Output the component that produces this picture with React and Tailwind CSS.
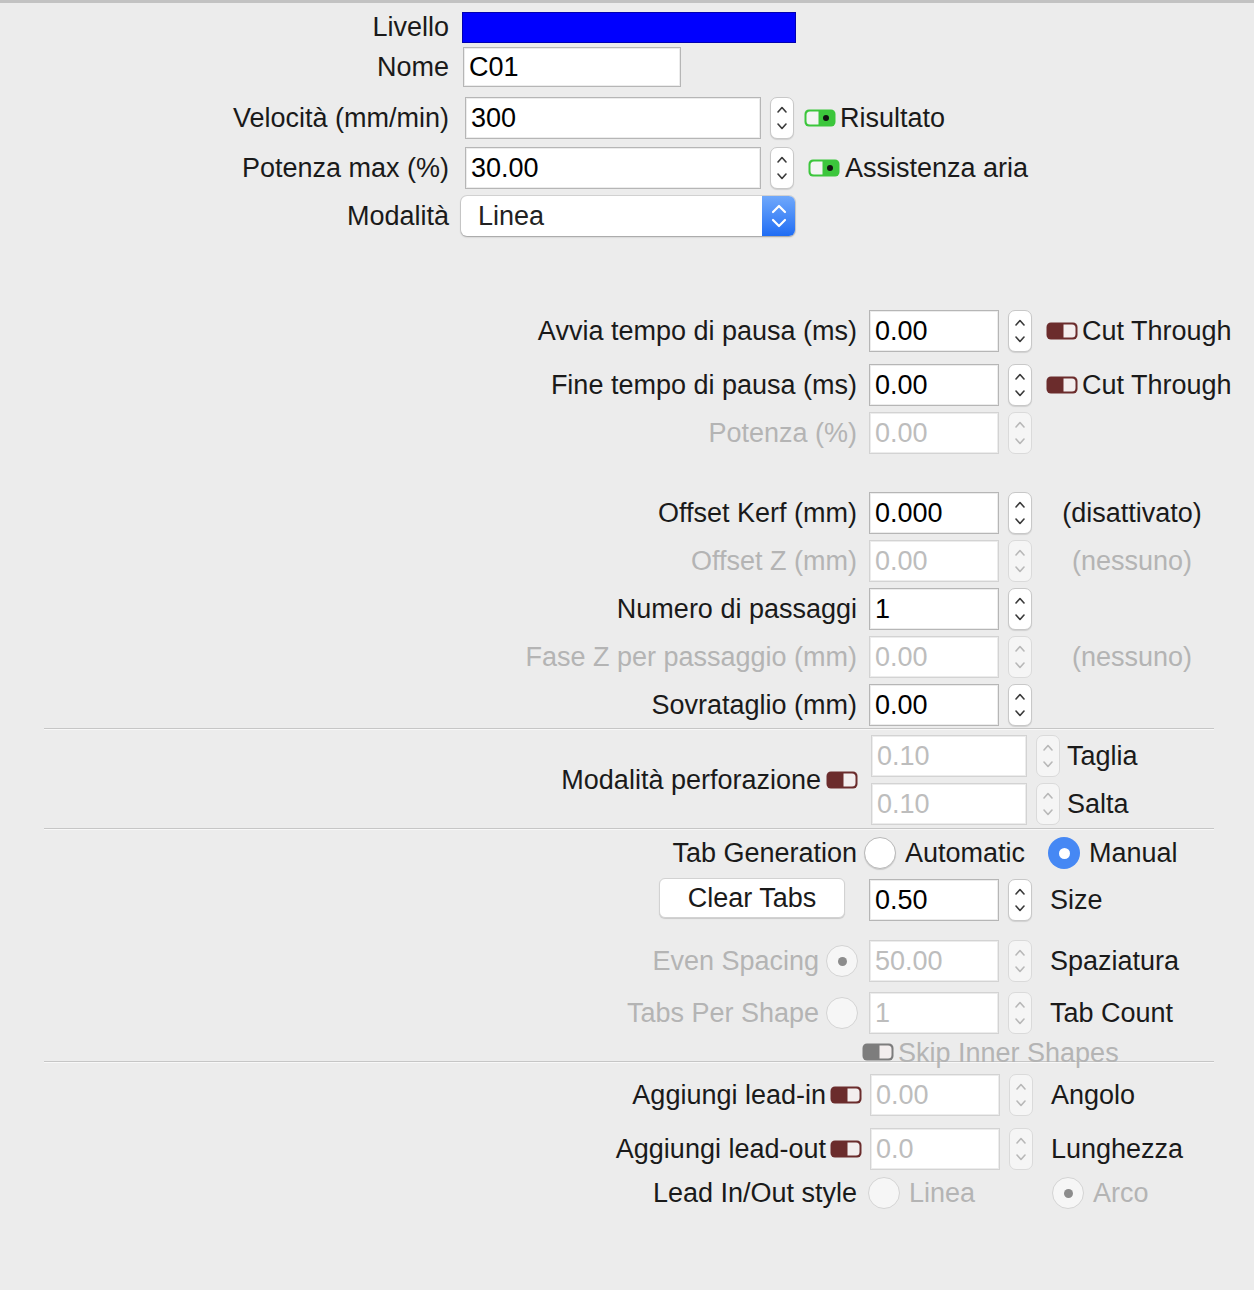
import React from "react";

function Spinner({ disabled, className = "" }) {
  return (
    <div
      className={`w-[24px] h-[42px] shrink-0 rounded-[7px] border ${
        disabled ? "bg-[#f5f5f5] border-[#dadada]" : "bg-white border-[#c8c8c8] shadow-[0_1px_1px_rgba(0,0,0,0.12)]"
      } ${className}`}
    >
      <svg
        width="22"
        height="40"
        viewBox="0 0 22 40"
        fill="none"
        stroke={disabled ? "#b8b8b8" : "#3a3a3a"}
        strokeWidth="1.6"
        strokeLinecap="round"
        strokeLinejoin="round"
      >
        <path d="M7 14 L11 9.5 L15 14" />
        <path d="M7 26 L11 30.5 L15 26" />
      </svg>
    </div>
  );
}

function Field({ value, disabled, w = "w-[130px]", h = "h-[42px]", className = "" }) {
  return (
    <div
      className={`${w} ${h} shrink-0 flex items-center pl-[5px] bg-white border ${
        disabled ? "border-[#d3d3d3] text-[#bdbdbd]" : "border-[#b6b6b6] text-black"
      } shadow-[inset_0_0_0_1px_#ececec] ${className}`}
    >
      {value}
    </div>
  );
}

function Toggle({ color = "#6b2c2c", className = "" }) {
  return (
    <svg width="32" height="18" viewBox="0 0 32 18" className={`shrink-0 ${className}`}>
      <rect x="0.5" y="0.5" width="31" height="17" rx="4.5" fill={color} />
      <path d="M17.5 2.5 H26 A3.5 3.5 0 0 1 29.5 6 V12 A3.5 3.5 0 0 1 26 15.5 H17.5 Z" fill="#f3eeee" />
    </svg>
  );
}

function GreenToggle({ className = "" }) {
  return (
    <svg width="32" height="18" viewBox="0 0 32 18" className={`shrink-0 ${className}`}>
      <rect x="0.5" y="0.5" width="31" height="17" rx="4.5" fill="#3cc63c" />
      <path d="M6 2.5 H14.5 V15.5 H6 A3.5 3.5 0 0 1 2.5 12 V6 A3.5 3.5 0 0 1 6 2.5 Z" fill="#f4f4f4" />
      <circle cx="22" cy="9" r="3" fill="#111" />
    </svg>
  );
}

function Radio({ checked, disabled, className = "" }) {
  if (checked && !disabled) {
    return (
      <div className={`w-[32px] h-[32px] shrink-0 rounded-full bg-[#4688f4] flex items-center justify-center ${className}`}>
        <div className="w-[11px] h-[11px] rounded-full bg-white" />
      </div>
    );
  }
  return (
    <div
      className={`w-[32px] h-[32px] shrink-0 rounded-full border flex items-center justify-center ${
        disabled ? "bg-[#f6f6f6] border-[#d4d4d4]" : "bg-white border-[#b9b9b9] shadow-[0_1px_1px_rgba(0,0,0,0.15)]"
      } ${className}`}
    >
      {checked && <div className="w-[9px] h-[9px] rounded-full bg-[#8c8c8c]" />}
    </div>
  );
}

function LabelCol({ children, w = "w-[857px]" }) {
  return <div className={`${w} shrink-0 flex items-center justify-end whitespace-nowrap`}>{children}</div>;
}

function Separator() {
  return <div className="ml-[44px] w-[1170px] h-[2px] border-t border-t-[#c6c6c6] border-b border-b-[#f8f8f8]" />;
}

export default function App() {
  return (
    <div className="w-[1254px] h-[1290px] overflow-hidden bg-[#ececec] border-t-[3px] border-[#c2c2c2] text-[27px] leading-none text-[#1a1a1a] whitespace-nowrap font-['Liberation_Sans',Arial,sans-serif]">
      {/* top block */}
      <div className="mt-[9px] h-[31px] flex items-center">
        <LabelCol w="w-[449px]">Livello</LabelCol>
        <div className="ml-[13px] w-[334px] h-[31px] bg-[#0000ff] border border-[#0000b0]" />
      </div>
      <div className="mt-[4px] h-[40px] flex items-center">
        <LabelCol w="w-[449px]">Nome</LabelCol>
        <Field value="C01" w="w-[218px]" h="h-[40px]" className="ml-[14px] pl-[3px]" />
      </div>
      <div className="mt-[10px] h-[42px] flex items-center">
        <LabelCol w="w-[449px]">Velocità (mm/min)</LabelCol>
        <Field value="300" w="w-[296px]" className="ml-[16px]" />
        <Spinner className="ml-[9px]" />
        <GreenToggle className="ml-[10px]" />
        <span className="ml-[4px]">Risultato</span>
      </div>
      <div className="mt-[8px] h-[42px] flex items-center">
        <LabelCol w="w-[449px]">Potenza max (%)</LabelCol>
        <Field value="30.00" w="w-[296px]" className="ml-[16px]" />
        <Spinner className="ml-[9px]" />
        <GreenToggle className="ml-[14px]" />
        <span className="ml-[5px]">Assistenza aria</span>
      </div>
      <div className="mt-[7px] h-[40px] flex items-center">
        <LabelCol w="w-[449px]">Modalità</LabelCol>
        <div className="ml-[12px] w-[334px] h-[40px] rounded-[6px] bg-white shadow-[0_0_0_1px_rgba(0,0,0,0.1),0_1px_2px_rgba(0,0,0,0.25)] flex items-center">
          <span className="pl-[17px] flex-1 text-[#222]">Linea</span>
          <div className="w-[33px] h-full rounded-r-[6px] bg-linear-to-b from-[#6fa8fb] to-[#1f6cf3] flex items-center justify-center">
            <svg width="20" height="30" viewBox="0 0 20 30" fill="none" stroke="#fff" strokeWidth="2.2" strokeLinecap="round" strokeLinejoin="round">
              <path d="M4 11 L10 5 L16 11" />
              <path d="M4 19 L10 25 L16 19" />
            </svg>
          </div>
        </div>
      </div>

      {/* pause section */}
      <div className="mt-[74px] h-[42px] flex items-center">
        <LabelCol>Avvia tempo di pausa (ms)</LabelCol>
        <Field value="0.00" className="ml-[12px]" />
        <Spinner className="ml-[9px]" />
        <Toggle className="ml-[14px]" />
        <span className="ml-[4px]">Cut Through</span>
      </div>
      <div className="mt-[12px] h-[42px] flex items-center">
        <LabelCol>Fine tempo di pausa (ms)</LabelCol>
        <Field value="0.00" className="ml-[12px]" />
        <Spinner className="ml-[9px]" />
        <Toggle className="ml-[14px]" />
        <span className="ml-[4px]">Cut Through</span>
      </div>
      <div className="mt-[6px] h-[42px] flex items-center text-[#b4b4b4]">
        <LabelCol>Potenza (%)</LabelCol>
        <Field value="0.00" disabled className="ml-[12px]" />
        <Spinner disabled className="ml-[9px]" />
      </div>

      {/* offsets */}
      <div className="mt-[38px] h-[42px] flex items-center">
        <LabelCol>Offset Kerf (mm)</LabelCol>
        <Field value="0.000" className="ml-[12px]" />
        <Spinner className="ml-[9px]" />
        <span className="ml-[14px] w-[172px] text-center">(disattivato)</span>
      </div>
      <div className="mt-[6px] h-[42px] flex items-center text-[#b4b4b4]">
        <LabelCol>Offset Z (mm)</LabelCol>
        <Field value="0.00" disabled className="ml-[12px]" />
        <Spinner disabled className="ml-[9px]" />
        <span className="ml-[14px] w-[172px] text-center">(nessuno)</span>
      </div>
      <div className="mt-[6px] h-[42px] flex items-center">
        <LabelCol>Numero di passaggi</LabelCol>
        <Field value="1" className="ml-[12px]" />
        <Spinner className="ml-[9px]" />
      </div>
      <div className="mt-[6px] h-[42px] flex items-center text-[#b4b4b4]">
        <LabelCol>Fase Z per passaggio (mm)</LabelCol>
        <Field value="0.00" disabled className="ml-[12px]" />
        <Spinner disabled className="ml-[9px]" />
        <span className="ml-[14px] w-[172px] text-center">(nessuno)</span>
      </div>
      <div className="mt-[6px] h-[42px] flex items-center">
        <LabelCol>Sovrataglio (mm)</LabelCol>
        <Field value="0.00" className="ml-[12px]" />
        <Spinner className="ml-[9px]" />
      </div>

      <div className="mt-[2px]">
        <Separator />
      </div>

      {/* perforation */}
      <div className="mt-[5px] flex items-center">
        <LabelCol w="w-[858px]">
          <span>Modalità perforazione</span>
          <Toggle className="ml-[5px]" />
        </LabelCol>
        <div className="ml-[13px] flex flex-col gap-[6px]">
          <div className="h-[42px] flex items-center">
            <Field value="0.10" disabled w="w-[156px]" />
            <Spinner disabled className="ml-[9px]" />
            <span className="ml-[7px]">Taglia</span>
          </div>
          <div className="h-[42px] flex items-center">
            <Field value="0.10" disabled w="w-[156px]" />
            <Spinner disabled className="ml-[9px]" />
            <span className="ml-[7px]">Salta</span>
          </div>
        </div>
      </div>

      <div className="mt-[3px]">
        <Separator />
      </div>

      {/* tabs */}
      <div className="mt-[7px] h-[32px] flex items-center">
        <LabelCol>Tab Generation</LabelCol>
        <div className="ml-[7px] w-[184px] flex items-center">
          <Radio />
          <span className="ml-[9px]">Automatic</span>
        </div>
        <Radio checked />
        <span className="ml-[9px]">Manual</span>
      </div>
      <div className="mt-[10px] h-[42px] flex items-center">
        <LabelCol>
          <div className="mr-[12px] -translate-y-[2px] w-[186px] h-[40px] rounded-[6px] bg-white border border-[#d2d2d2] shadow-[0_1px_1px_rgba(0,0,0,0.15)] flex items-center justify-center">
            Clear Tabs
          </div>
        </LabelCol>
        <Field value="0.50" className="ml-[12px]" />
        <Spinner className="ml-[9px]" />
        <span className="ml-[18px]">Size</span>
      </div>
      <div className="mt-[19px] h-[42px] flex items-center">
        <LabelCol w="w-[858px]">
          <span className="text-[#b4b4b4]">Even Spacing</span>
          <Radio checked disabled className="ml-[7px]" />
        </LabelCol>
        <Field value="50.00" disabled className="ml-[11px]" />
        <Spinner disabled className="ml-[9px]" />
        <span className="ml-[18px]">Spaziatura</span>
      </div>
      <div className="mt-[10px] h-[42px] flex items-center">
        <LabelCol w="w-[858px]">
          <span className="text-[#b4b4b4]">Tabs Per Shape</span>
          <Radio disabled className="ml-[7px]" />
        </LabelCol>
        <Field value="1" disabled className="ml-[11px]" />
        <Spinner disabled className="ml-[9px]" />
        <span className="ml-[18px]">Tab Count</span>
      </div>
      <div className="mt-[5px] h-[22px] flex items-center pl-[862px] text-[#b4b4b4]">
        <Toggle color="#7d7d7d" className="translate-y-[2px]" />
        <span className="ml-[4px] translate-y-[3px]">Skip Inner Shapes</span>
      </div>

      <Separator />

      {/* lead in/out */}
      <div className="mt-[11px] h-[42px] flex items-center">
        <LabelCol w="w-[862px]">
          <span>Aggiungi lead-in</span>
          <Toggle className="ml-[4px]" />
        </LabelCol>
        <Field value="0.00" disabled className="ml-[8px]" />
        <Spinner disabled className="ml-[9px]" />
        <span className="ml-[18px]">Angolo</span>
      </div>
      <div className="mt-[12px] h-[42px] flex items-center">
        <LabelCol w="w-[862px]">
          <span>Aggiungi lead-out</span>
          <Toggle className="ml-[4px]" />
        </LabelCol>
        <Field value="0.0" disabled className="ml-[8px]" />
        <Spinner disabled className="ml-[9px]" />
        <span className="ml-[18px]">Lunghezza</span>
      </div>
      <div className="mt-[7px] h-[32px] flex items-center">
        <LabelCol>Lead In/Out style</LabelCol>
        <div className="ml-[11px] w-[184px] flex items-center text-[#b4b4b4]">
          <Radio disabled />
          <span className="ml-[9px]">Linea</span>
        </div>
        <Radio checked disabled />
        <span className="ml-[9px] text-[#b4b4b4]">Arco</span>
      </div>
    </div>
  );
}
